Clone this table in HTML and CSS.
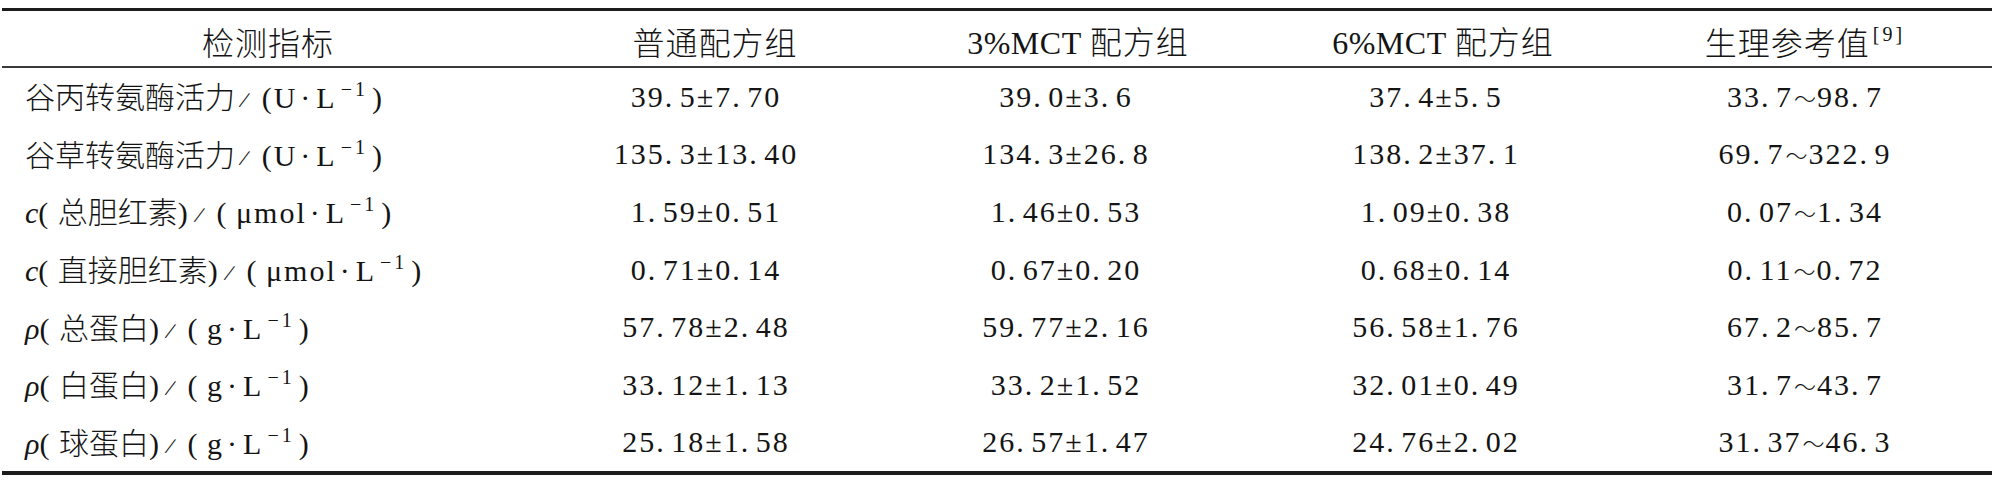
FILE: index.html
```html
<!DOCTYPE html>
<html lang="zh-CN">
<head>
<meta charset="utf-8">
<title>检测指标</title>
<link rel="stylesheet" href="styles.css">
</head>
<body>
<div class="table">
  <div class="row head">
    <div class="cell c1">检测指标</div>
    <div class="cell c2">普通配方组</div>
    <div class="cell c3"><span class="lat">3%MCT</span> 配方组</div>
    <div class="cell c4"><span class="lat">6%MCT</span> 配方组</div>
    <div class="cell c5">生理参考值<sup class="ref">[9]</sup></div>
  </div>
  <div class="row">
    <div class="cell label">谷丙转氨酶活力<span class="sl">/</span><span class="lat">(U<span class="dot">·</span>L<sup>−1</sup>)</span></div>
    <div class="cell num">39. 5±7. 70</div>
    <div class="cell num">39. 0±3. 6</div>
    <div class="cell num">37. 4±5. 5</div>
    <div class="cell num">33. 7<span class="rng">～</span>98. 7</div>
  </div>
  <div class="row">
    <div class="cell label">谷草转氨酶活力<span class="sl">/</span><span class="lat">(U<span class="dot">·</span>L<sup>−1</sup>)</span></div>
    <div class="cell num">135. 3±13. 40</div>
    <div class="cell num">134. 3±26. 8</div>
    <div class="cell num">138. 2±37. 1</div>
    <div class="cell num">69. 7<span class="rng">～</span>322. 9</div>
  </div>
  <div class="row">
    <div class="cell label"><span class="lat"><i>c</i>( </span>总胆红素<span class="lat">)</span><span class="sl">/</span><span class="lat">( μmol<span class="dot">·</span>L<sup>−1</sup>)</span></div>
    <div class="cell num">1. 59±0. 51</div>
    <div class="cell num">1. 46±0. 53</div>
    <div class="cell num">1. 09±0. 38</div>
    <div class="cell num">0. 07<span class="rng">～</span>1. 34</div>
  </div>
  <div class="row">
    <div class="cell label"><span class="lat"><i>c</i>( </span>直接胆红素<span class="lat">)</span><span class="sl">/</span><span class="lat">( μmol<span class="dot">·</span>L<sup>−1</sup>)</span></div>
    <div class="cell num">0. 71±0. 14</div>
    <div class="cell num">0. 67±0. 20</div>
    <div class="cell num">0. 68±0. 14</div>
    <div class="cell num">0. 11<span class="rng">～</span>0. 72</div>
  </div>
  <div class="row">
    <div class="cell label"><span class="lat"><i>ρ</i>( </span>总蛋白<span class="lat">)</span><span class="sl">/</span><span class="lat">( g<span class="dot">·</span>L<sup>−1</sup>)</span></div>
    <div class="cell num">57. 78±2. 48</div>
    <div class="cell num">59. 77±2. 16</div>
    <div class="cell num">56. 58±1. 76</div>
    <div class="cell num">67. 2<span class="rng">～</span>85. 7</div>
  </div>
  <div class="row">
    <div class="cell label"><span class="lat"><i>ρ</i>( </span>白蛋白<span class="lat">)</span><span class="sl">/</span><span class="lat">( g<span class="dot">·</span>L<sup>−1</sup>)</span></div>
    <div class="cell num">33. 12±1. 13</div>
    <div class="cell num">33. 2±1. 52</div>
    <div class="cell num">32. 01±0. 49</div>
    <div class="cell num">31. 7<span class="rng">～</span>43. 7</div>
  </div>
  <div class="row">
    <div class="cell label"><span class="lat"><i>ρ</i>( </span>球蛋白<span class="lat">)</span><span class="sl">/</span><span class="lat">( g<span class="dot">·</span>L<sup>−1</sup>)</span></div>
    <div class="cell num">25. 18±1. 58</div>
    <div class="cell num">26. 57±1. 47</div>
    <div class="cell num">24. 76±2. 02</div>
    <div class="cell num">31. 37<span class="rng">～</span>46. 3</div>
  </div>
</div>
</body>
</html>
```

FILE: styles.css
```css
html, body {
  margin: 0;
  padding: 0;
  background: #ffffff;
}

body {
  font-family: "Noto Sans CJK SC", sans-serif;
  color: #141414;
}

.table {
  margin: 8px 0 0 2px;
  width: 1990px;
  border-top: 3px solid #1c1c1c;
  border-bottom: 4px solid #1c1c1c;
}

.row {
  display: grid;
  grid-template-columns: 532px 344px 376px 364px 374px;
  height: 57.6px;
  align-items: center;
}

.row.head {
  height: 55px;
  border-bottom: 2px solid #3a3a3a;
  font-size: 32px;
  letter-spacing: 1px;
}

.cell {
  white-space: nowrap;
  text-align: center;
  line-height: 1;
}

.head .cell {
  padding-top: 5px;
  font-weight: 300;
}

.head .c2 { padding-left: 18px; }
.head .c3 { padding-left: 24px; }
.head .c4 { padding-left: 14px; }

.lat {
  font-family: "Liberation Serif", "Times New Roman", serif;
  font-weight: 400;
}

.head .lat {
  letter-spacing: 0.5px;
}

.ref {
  font-family: "Liberation Serif", "Times New Roman", serif;
  font-weight: 400;
  font-size: 20px;
  vertical-align: 14px;
  line-height: 0;
  margin-left: 3px;
  letter-spacing: 3px;
}

.label {
  text-align: left;
  padding-left: 23px;
  font-size: 30px;
  font-weight: 300;
}

.label .lat {
  letter-spacing: 2px;
  word-spacing: -2px;
}

.label i {
  font-style: italic;
  letter-spacing: 0;
}

.dot {
  margin: 0 4px 0 3px;
}

.label sup {
  font-size: 20px;
  vertical-align: 12px;
  line-height: 0;
  margin: 0 4px 0 4px;
  letter-spacing: 3px;
}

.sl {
  display: inline-block;
  font-family: "Liberation Serif", "Times New Roman", serif;
  font-weight: 400;
  font-size: 24px;
  margin: 0 14px 0 6px;
  transform: rotate(18deg);
}

.num {
  font-family: "Liberation Serif", "Times New Roman", serif;
  font-size: 30px;
  letter-spacing: 2px;
  word-spacing: -4px;
}

.rng {
  font-family: "Noto Sans CJK SC", sans-serif;
  font-weight: 300;
  font-size: 22px;
  letter-spacing: 0;
  margin: 0 1px;
}
```
